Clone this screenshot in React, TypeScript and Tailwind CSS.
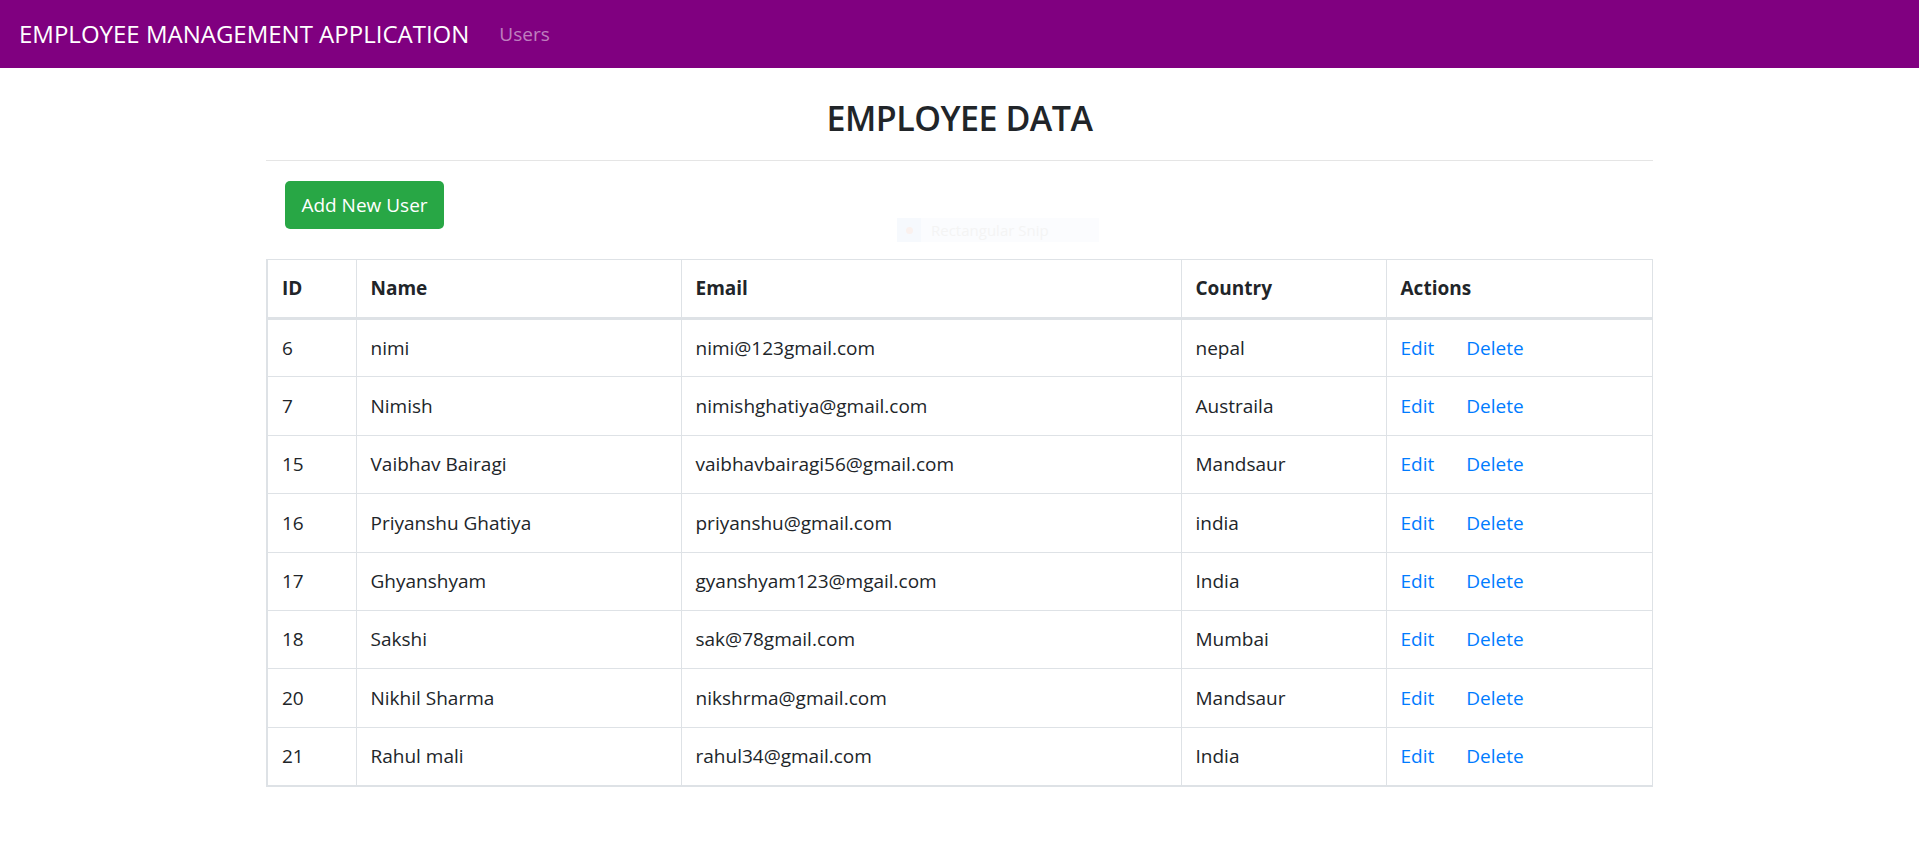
const users = [
  { id: 6, name: 'nimi', email: 'nimi@123gmail.com', country: 'nepal' },
  { id: 7, name: 'Nimish', email: 'nimishghatiya@gmail.com', country: 'Austraila' },
  { id: 15, name: 'Vaibhav Bairagi', email: 'vaibhavbairagi56@gmail.com', country: 'Mandsaur' },
  { id: 16, name: 'Priyanshu Ghatiya', email: 'priyanshu@gmail.com', country: 'india' },
  { id: 17, name: 'Ghyanshyam', email: 'gyanshyam123@mgail.com', country: 'India' },
  { id: 18, name: 'Sakshi', email: 'sak@78gmail.com', country: 'Mumbai' },
  { id: 20, name: 'Nikhil Sharma', email: 'nikshrma@gmail.com', country: 'Mandsaur' },
  { id: 21, name: 'Rahul mali', email: 'rahul34@gmail.com', country: 'India' },
];

function Navbar() {
  return (
    <nav className="flex h-[68px] items-center bg-[#800080] px-[19px]">
      <a href="#" className="text-[24px] leading-[36px] text-white">
        EMPLOYEE MANAGEMENT APPLICATION
      </a>
      <a href="#" className="ml-[30px] text-[19px] text-white/50">
        Users
      </a>
    </nav>
  );
}

function UsersTable() {
  const cell = 'border border-[#dee2e6] px-[14px] align-middle';

  return (
    <table className="mt-[30px] w-full table-fixed border-collapse border-b-2 border-l-2 border-[#dee2e6] text-left text-[19px] text-[#212529]">
      <colgroup>
        <col className="w-[89px]" />
        <col className="w-[325px]" />
        <col className="w-[500px]" />
        <col className="w-[205px]" />
        <col />
      </colgroup>
      <thead>
        <tr className="border-b-[3px] border-[#dee2e6]">
          <th className={`${cell} h-[59px] font-bold`}>ID</th>
          <th className={`${cell} h-[59px] font-bold`}>Name</th>
          <th className={`${cell} h-[59px] font-bold`}>Email</th>
          <th className={`${cell} h-[59px] font-bold`}>Country</th>
          <th className={`${cell} h-[59px] font-bold`}>Actions</th>
        </tr>
      </thead>
      <tbody>
        {users.map((user) => (
          <tr key={user.id}>
            <td className={`${cell} h-[58.4px]`}>{user.id}</td>
            <td className={`${cell} h-[58.4px]`}>{user.name}</td>
            <td className={`${cell} h-[58.4px]`}>{user.email}</td>
            <td className={`${cell} h-[58.4px]`}>{user.country}</td>
            <td className={`${cell} h-[58.4px]`}>
              <div className="flex gap-[32px] text-[#007bff]">
                <a href="#">Edit</a>
                <a href="#">Delete</a>
              </div>
            </td>
          </tr>
        ))}
      </tbody>
    </table>
  );
}

export default function App() {
  return (
    <div className="min-h-screen bg-white font-['Open_Sans',sans-serif]">
      <Navbar />
      <main className="relative mx-auto w-[1387px] pt-[30px]">
        <h2 className="text-center text-[34px] leading-[41px] font-semibold tracking-[-0.5px] text-[#212529]">
          EMPLOYEE DATA
        </h2>
        <hr className="mt-[21px] border-t border-[#e5e5e5]" />
        <button className="mt-[20px] ml-[19px] h-[48px] w-[159px] rounded-[5px] bg-[#28a745] text-[19px] text-white">
          Add New User
        </button>

        {/* faint leftover of a snipping tool bar */}
        <div className="absolute top-[150px] left-[631px] flex h-[24px] w-[202px] items-center bg-[#fbfcfe]">
          <div className="flex h-[24px] w-[24px] items-center justify-center bg-[#f6f9fd]">
            <div className="h-[7px] w-[7px] rounded-full bg-[#faf1ee]" />
          </div>
          <span className="ml-[10px] text-[15px] text-[#f4f4f4]">Rectangular Snip</span>
        </div>

        <UsersTable />
      </main>
    </div>
  );
}
